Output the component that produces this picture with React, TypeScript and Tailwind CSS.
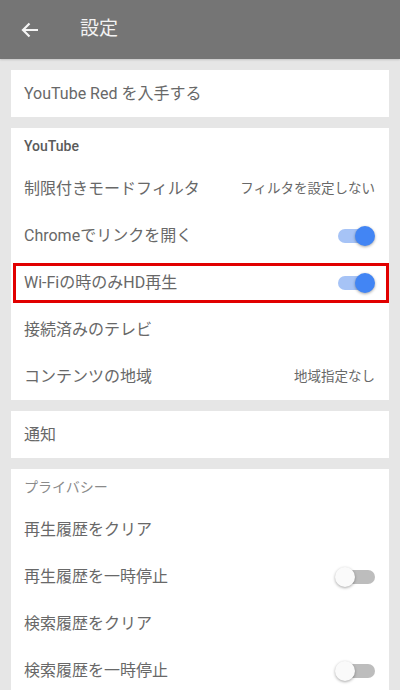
type Row = {
  label: string;
  value?: string;
  toggle?: "on" | "off";
  highlight?: boolean;
};

function Toggle({ on }: { on: boolean }) {
  return (
    <div className="relative h-5 w-[38px] shrink-0">
      <div
        className={
          on
            ? "absolute left-[1px] right-[4px] top-[3px] h-[14px] rounded-full bg-[#a6c3f6]"
            : "absolute left-[2px] right-0 top-[3px] h-[14px] rounded-full bg-[#bdbdbd]"
        }
      />
      <div
        className={
          on
            ? "absolute right-0 top-0 h-5 w-5 rounded-full bg-[#4285f4] shadow-[0_1px_3px_rgba(0,0,0,0.35)]"
            : "absolute left-[-2px] top-0 h-5 w-5 rounded-full bg-[#fafafa] shadow-[0_1px_3px_rgba(0,0,0,0.35)]"
        }
      />
    </div>
  );
}

function SettingRow({ row }: { row: Row }) {
  return (
    <div className="relative flex h-[47px] items-center justify-between pl-[13px] pr-[14px]">
      <span className="text-[16px] text-[#686868]">{row.label}</span>
      {row.value && <span className="text-[13.5px] text-[#686868]">{row.value}</span>}
      {row.toggle && <Toggle on={row.toggle === "on"} />}
      {row.highlight && (
        <div className="pointer-events-none absolute bottom-[3px] left-[2px] right-0 top-[4px] border-[3px] border-[#e10000]" />
      )}
    </div>
  );
}

const youtubeRows: Row[] = [
  { label: "制限付きモードフィルタ", value: "フィルタを設定しない" },
  { label: "Chromeでリンクを開く", toggle: "on" },
  { label: "Wi-Fiの時のみHD再生", toggle: "on", highlight: true },
  { label: "接続済みのテレビ" },
  { label: "コンテンツの地域", value: "地域指定なし" },
];

const privacyRows: Row[] = [
  { label: "再生履歴をクリア" },
  { label: "再生履歴を一時停止", toggle: "off" },
  { label: "検索履歴をクリア" },
  { label: "検索履歴を一時停止", toggle: "off" },
];

export default function App() {
  return (
    <div
      className="h-[690px] w-[400px] overflow-hidden bg-[#e6e6e6]"
      style={{ fontFamily: "Roboto, 'Noto Sans CJK JP', sans-serif" }}
    >
      <header className="flex h-[59px] items-center bg-[#757575] shadow-[0_1px_2px_rgba(0,0,0,0.15)]">
        <svg className="ml-[18px]" width="24" height="24" viewBox="0 0 24 24" fill="none">
          <path d="M20 12H5M11.5 5.5L5 12l6.5 6.5" stroke="#f5f5f5" strokeWidth="2.2" />
        </svg>
        <h1 className="ml-[38px] text-[19px] text-[#f2f2f2]">設定</h1>
      </header>

      <div className="flex flex-col gap-[11px] px-[11px] pt-[11px]">
        <div className="bg-white">
          <SettingRow row={{ label: "YouTube Red を入手する" }} />
        </div>

        <div className="bg-white">
          <div className="flex h-[37px] items-center pl-[13px]">
            <span className="text-[14px] font-medium text-[#5a5a5a]">YouTube</span>
          </div>
          {youtubeRows.map((r) => (
            <SettingRow key={r.label} row={r} />
          ))}
        </div>

        <div className="bg-white">
          <SettingRow row={{ label: "通知" }} />
        </div>

        <div className="bg-white">
          <div className="flex h-[37px] items-center pl-[13px]">
            <span className="text-[14px] text-[#8a8a8a]">プライバシー</span>
          </div>
          {privacyRows.map((r) => (
            <SettingRow key={r.label} row={r} />
          ))}
        </div>
      </div>
    </div>
  );
}
